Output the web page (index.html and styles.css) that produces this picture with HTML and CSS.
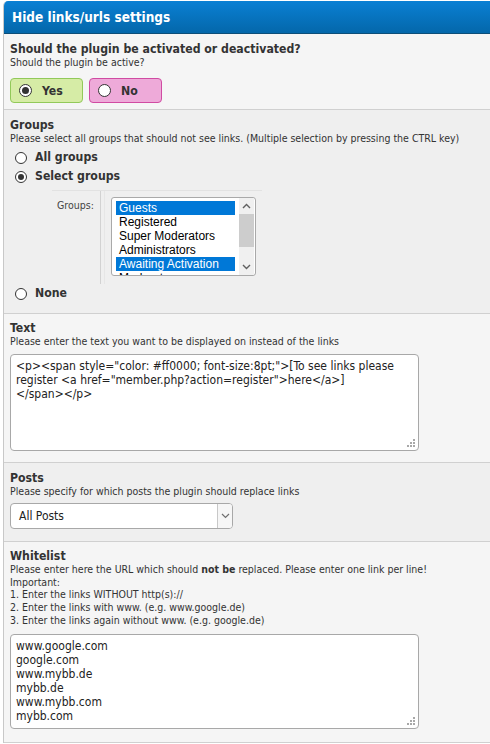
FILE: index.html
```html
<!DOCTYPE html>
<html>
<head>
<meta charset="utf-8">
<link rel="stylesheet" href="styles.css">
</head>
<body>
<div class="panel">
  <div class="head">Hide links/urls settings</div>

  <div class="row r1">
    <div class="title">Should the plugin be activated or deactivated?</div>
    <div class="desc">Should the plugin be active?</div>
    <div class="yesno">
      <span class="btn yes"><span class="radio on"></span>Yes</span>
      <span class="btn no"><span class="radio"></span>No</span>
    </div>
  </div>

  <div class="row alt r2">
    <div class="title">Groups</div>
    <div class="desc">Please select all groups that should not see links. (Multiple selection by pressing the CTRL key)</div>
    <div class="opt first"><span class="radio sm"></span>All groups</div>
    <div class="opt"><span class="radio sm on"></span>Select groups</div>
    <div class="subtable">
      <div class="sublabel">Groups:</div>
      <div class="subcell">
        <div class="listbox">
          <div class="items">
            <div class="item sel">Guests</div>
            <div class="item">Registered</div>
            <div class="item">Super Moderators</div>
            <div class="item">Administrators</div>
            <div class="item sel">Awaiting Activation</div>
            <div class="item">Moderators</div>
          </div>
          <div class="sbar">
            <div class="sarrow"><svg width="9" height="6" viewBox="0 0 9 6"><path d="M1 5 L4.5 1.5 L8 5" fill="none" stroke="#606060" stroke-width="1.4"/></svg></div>
            <div class="strack"><div class="sthumb"></div></div>
            <div class="sarrow"><svg width="9" height="6" viewBox="0 0 9 6"><path d="M1 1 L4.5 4.5 L8 1" fill="none" stroke="#606060" stroke-width="1.4"/></svg></div>
          </div>
        </div>
      </div>
    </div>
    <div class="opt none"><span class="radio sm"></span>None</div>
  </div>

  <div class="row r3">
    <div class="title">Text</div>
    <div class="desc">Please enter the text you want to be displayed on instead of the links</div>
    <div class="tarea t1">&lt;p&gt;&lt;span style="color: #ff0000; font-size:8pt;"&gt;[To see links please
register &lt;a href="member.php?action=register"&gt;here&lt;/a&gt;]
&lt;/span&gt;&lt;/p&gt;<svg class="grip" width="8" height="8" viewBox="0 0 8 8"><g fill="#a8a8a8"><rect x="6" y="0" width="2" height="2"/><rect x="3" y="3" width="2" height="2"/><rect x="6" y="3" width="2" height="2"/><rect x="0" y="6" width="2" height="2"/><rect x="3" y="6" width="2" height="2"/><rect x="6" y="6" width="2" height="2"/></g></svg></div>
  </div>

  <div class="row alt r4">
    <div class="title">Posts</div>
    <div class="desc">Please specify for which posts the plugin should replace links</div>
    <div class="select">
      <span class="seltext">All Posts</span>
      <span class="selbtn"><svg width="9" height="6" viewBox="0 0 9 6"><path d="M1 1 L4.5 4.5 L8 1" fill="none" stroke="#707070" stroke-width="1.2"/></svg></span>
    </div>
  </div>

  <div class="row r5">
    <div class="title">Whitelist</div>
    <div class="desc ml">Please enter here the URL which should <b>not be</b> replaced. Please enter one link per line!<br>Important:<br>1. Enter the links WITHOUT http(s)://<br>2. Enter the links with www. (e.g. www.google.de)<br>3. Enter the links again without www. (e.g. google.de)</div>
    <div class="tarea t2">www.google.com
google.com
www.mybb.de
mybb.de
www.mybb.com
mybb.com<svg class="grip" width="8" height="8" viewBox="0 0 8 8"><g fill="#a8a8a8"><rect x="6" y="0" width="2" height="2"/><rect x="3" y="3" width="2" height="2"/><rect x="6" y="3" width="2" height="2"/><rect x="0" y="6" width="2" height="2"/><rect x="3" y="6" width="2" height="2"/><rect x="6" y="6" width="2" height="2"/></g></svg></div>
  </div>
</div>
</body>
</html>
```
FILE: styles.css
```css
html, body {
  margin: 0;
  padding: 0;
  background: #ffffff;
}
body {
  font-family: "DejaVu Sans Condensed", "DejaVu Sans", sans-serif;
  color: #333;
}
.panel {
  margin: 1px 0 0 3px;
  border-left: 1px solid #c8c8c8;
  border-top-left-radius: 5px;
  overflow: hidden;
}
.head {
  height: 32px;
  line-height: 33px;
  padding-left: 8px;
  background: linear-gradient(#0a80d4, #0467aa);
  border-bottom: 1px solid #0d4e78;
  color: #fff;
  font-weight: bold;
  font-size: 13.5px;
}
.row {
  background: #f5f5f5;
  border-bottom: 1px solid #d0d0d0;
  padding: 8px 6px 6px 6px;
}
.row.alt { background: #efefef; }
.title {
  font-weight: bold;
  font-size: 12.2px;
  line-height: 14px;
  color: #333;
}
.desc {
  font-size: 10.5px;
  line-height: 13px;
  color: #333;
}
.desc.ml { line-height: 12.7px; }
.desc b { font-weight: bold; }

.yesno {
  display: flex;
  gap: 6px;
  margin-top: 9px;
}
.btn {
  display: flex;
  align-items: center;
  box-sizing: border-box;
  width: 73px;
  height: 25px;
  border-radius: 4px;
  font-weight: bold;
  font-size: 12.2px;
  color: #333;
  padding-left: 8px;
}
.btn.yes { background: #d6eca6; border: 1px solid #92c95a; }
.btn.no { background: #eeaad9; border: 1px solid #d04ba2; }
.radio {
  box-sizing: border-box;
  width: 13px;
  height: 13px;
  border: 1px solid #333;
  border-radius: 50%;
  background: #fff;
  display: inline-flex;
  align-items: center;
  justify-content: center;
  margin-right: 9px;
  flex: none;
}
.radio.on::after {
  content: "";
  width: 7px;
  height: 7px;
  border-radius: 50%;
  background: #333;
}
.radio.sm { width: 12px; height: 12px; margin-right: 8px; }
.radio.sm.on::after { width: 6px; height: 6px; }
.btn .radio { margin-right: 10px; }

.opt {
  display: flex;
  align-items: center;
  font-weight: bold;
  font-size: 12.2px;
  line-height: 19px;
  padding-left: 5px;
}
.opt.first { margin-top: 3px; }
.opt.none { margin-top: 0; }

.subtable {
  display: flex;
  margin-left: 42px;
  margin-top: 4px;
  width: 210px;
  height: 93px;
  border-top: 1px solid #e2e2e2;
}
.sublabel {
  width: 49px;
  box-sizing: border-box;
  border-right: 1px solid #d2d2d2;
  font-size: 10.5px;
  padding: 8px 0 0 5px;
  color: #444;
}
.subcell {
  margin-left: 3px;
  border-left: 1px solid #e6e6e6;
  padding: 6px 0 0 6px;
  flex: 1;
}
.listbox {
  box-sizing: border-box;
  width: 145px;
  height: 79px;
  border: 1px solid #a9a9a9;
  border-radius: 3px;
  background: #fff;
  display: flex;
  overflow: hidden;
  padding: 3px 1px 0 4px;
}
.items {
  flex: 1;
  overflow: hidden;
}
.item {
  font-family: "Liberation Sans", Arial, sans-serif;
  font-size: 12px;
  height: 14px;
  line-height: 14px;
  padding-left: 3px;
  color: #000;
  white-space: nowrap;
}
.item.sel { background: #0078d7; color: #fff; }
.sbar {
  width: 15px;
  margin-left: 4px;
  margin-top: -3px;
  display: flex;
  flex-direction: column;
  background: #f0f0f0;
}
.sarrow {
  height: 16px;
  display: flex;
  align-items: center;
  justify-content: center;
}
.strack { flex: 1; }
.sthumb { height: 33px; background: #cdcdcd; }

.tarea {
  position: relative;
  box-sizing: border-box;
  width: 409px;
  border: 1px solid #a8a8a8;
  border-radius: 4px;
  background: #fff;
  white-space: pre-wrap;
  font-size: 12px;
  line-height: 14px;
  padding: 4px 5px;
  color: #222;
}
.r1 { padding-bottom: 6px; }
.r2 { padding-bottom: 10px; }
.r3 { padding-top: 7px; padding-bottom: 11px; }
.t1 { height: 97px; margin-top: 6px; }
.r4 { padding-bottom: 12px; }
.r5 { padding-top: 7px; padding-bottom: 13px; }
.t2 { height: 95px; margin-top: 7px; }
.grip {
  position: absolute;
  right: 3px;
  bottom: 3px;
}
.select {
  box-sizing: border-box;
  width: 223px;
  height: 26px;
  margin-top: 5px;
  border: 1px solid #a8a8a8;
  border-radius: 4px;
  background: #fff;
  display: flex;
  align-items: center;
}
.seltext {
  flex: 1;
  font-size: 12px;
  padding-left: 8px;
  color: #222;
}
.selbtn {
  width: 14px;
  align-self: stretch;
  border-left: 1px solid #c8c8c8;
  display: flex;
  align-items: center;
  justify-content: center;
  background: #f6f6f6;
  border-radius: 0 3px 3px 0;
}
```
